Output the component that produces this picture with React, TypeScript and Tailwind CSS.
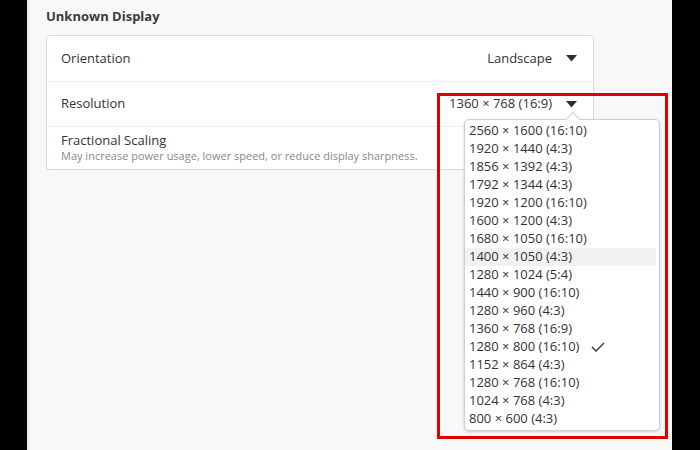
const RESOLUTIONS = [
  "2560 × 1600 (16:10)",
  "1920 × 1440 (4:3)",
  "1856 × 1392 (4:3)",
  "1792 × 1344 (4:3)",
  "1920 × 1200 (16:10)",
  "1600 × 1200 (4:3)",
  "1680 × 1050 (16:10)",
  "1400 × 1050 (4:3)",
  "1280 × 1024 (5:4)",
  "1440 × 900 (16:10)",
  "1280 × 960 (4:3)",
  "1360 × 768 (16:9)",
  "1280 × 800 (16:10)",
  "1152 × 864 (4:3)",
  "1280 × 768 (16:10)",
  "1024 × 768 (4:3)",
  "800 × 600 (4:3)",
];

const HOVERED = "1400 × 1050 (4:3)";
const CHECKED = "1280 × 800 (16:10)";

function Caret() {
  return (
    <svg width="11" height="7" viewBox="0 0 11 7" className="shrink-0">
      <path d="M0 0 L11 0 L5.5 6.5 Z" fill="#2e2e2e" />
    </svg>
  );
}

function Row({ label, value, first }: { label: string; value?: string; first?: boolean }) {
  return (
    <div
      className={`flex h-[45px] items-center justify-between pl-[14px] pr-[16px] ${first ? "" : "border-t border-[#ececec]"}`}
    >
      <span className="text-[13px] text-[#333]">{label}</span>
      {value && (
        <div className="flex items-center gap-[14px]">
          <span className="text-[13px] text-[#333]">{value}</span>
          <Caret />
        </div>
      )}
    </div>
  );
}

export default function App() {
  return (
    <div
      className="relative flex h-[450px] w-[700px] overflow-hidden bg-black"
      style={{ fontFamily: '"Open Sans", "DejaVu Sans", sans-serif' }}
    >
      <div className="w-[27px] shrink-0 bg-black" />
      <div className="w-[3px] shrink-0 bg-[#ededed]" />
      <main className="flex-1 bg-[#f8f8f8] pl-[16px] pt-[7px]">
        <h2 className="text-[13px] font-bold leading-[18px] text-[#3a3a3a]">Unknown Display</h2>
        <div className="mt-[10px] w-[548px] rounded-[3px] border border-[#dadada] bg-white">
          <Row first label="Orientation" value="Landscape" />
          <Row label="Resolution" value="1360 × 768 (16:9)" />
          <div className="flex h-[43px] flex-col justify-center border-t border-[#ececec] pl-[14px] pb-[1px]">
            <div className="text-[13px] leading-[17px] text-[#333]">Fractional Scaling</div>
            <div className="-mt-[1px] text-[11px] leading-[16px] text-[#8a8a8a]">
              May increase power usage, lower speed, or reduce display sharpness.
            </div>
          </div>
        </div>
      </main>
      <div className="w-[28px] shrink-0 bg-black" />

      {/* dropdown popover */}
      <div className="absolute left-[464px] top-[119px] w-[196px] rounded-[5px] border border-[#cfcfcf] bg-white py-[2px] shadow-[0_1px_3px_rgba(0,0,0,0.18)]">
        <div className="absolute -top-[6px] left-[103px] h-[10px] w-[10px] rotate-45 border-l border-t border-[#cfcfcf] bg-white" />
        <ul className="relative">
          {RESOLUTIONS.map((r) => (
            <li
              key={r}
              className={`flex h-[18px] items-center gap-[12px] pl-[4px] text-[13px] text-[#333] ${r === HOVERED ? "mr-[3px] bg-[#f1f1f1]" : ""}`}
            >
              {r}
              {r === CHECKED && (
                <svg width="14" height="10" viewBox="0 0 14 10">
                  <path d="M1 5 L5 9 L13 1" fill="none" stroke="#333" strokeWidth="1.4" />
                </svg>
              )}
            </li>
          ))}
        </ul>
      </div>

      {/* annotation box */}
      <div className="pointer-events-none absolute left-[437px] top-[93px] h-[346px] w-[231px] border-[3px] border-[#e00000]" />
    </div>
  );
}
